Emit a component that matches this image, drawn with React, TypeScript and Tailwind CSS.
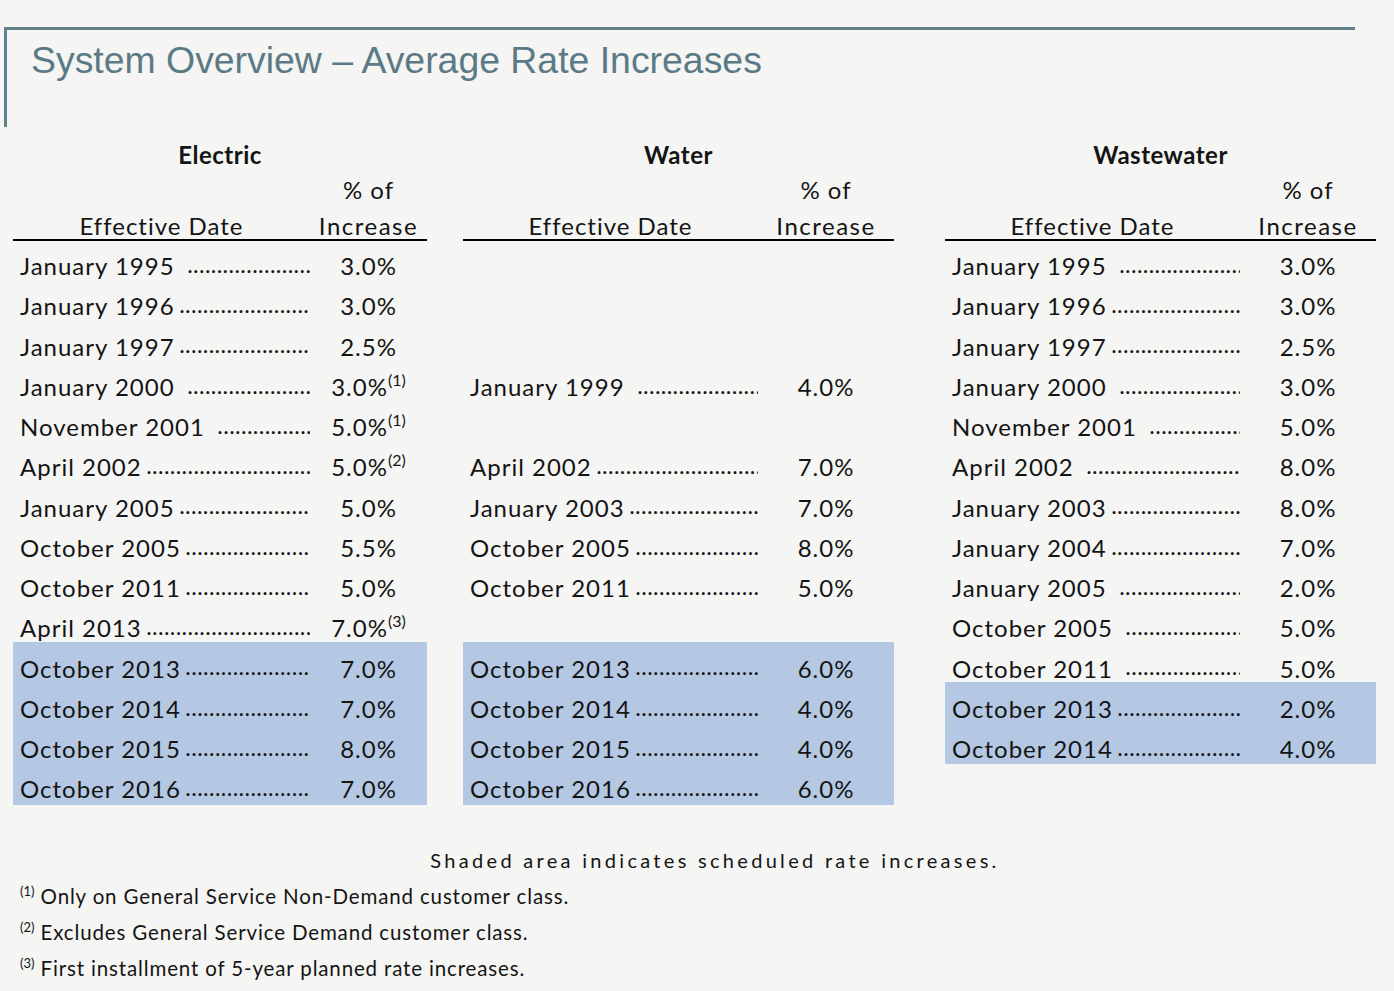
type Row = { date?: string; pct?: string; note?: string; wide?: boolean; shaded?: boolean }

const electric: Row[] = [
  { date: 'January 1995', pct: '3.0%', wide: true },
  { date: 'January 1996', pct: '3.0%' },
  { date: 'January 1997', pct: '2.5%' },
  { date: 'January 2000', pct: '3.0%', note: '(1)', wide: true },
  { date: 'November 2001', pct: '5.0%', note: '(1)', wide: true },
  { date: 'April 2002', pct: '5.0%', note: '(2)' },
  { date: 'January 2005', pct: '5.0%' },
  { date: 'October 2005', pct: '5.5%' },
  { date: 'October 2011', pct: '5.0%' },
  { date: 'April 2013', pct: '7.0%', note: '(3)' },
  { date: 'October 2013', pct: '7.0%', shaded: true },
  { date: 'October 2014', pct: '7.0%', shaded: true },
  { date: 'October 2015', pct: '8.0%', shaded: true },
  { date: 'October 2016', pct: '7.0%', shaded: true },
]

const water: Row[] = [
  {},
  {},
  {},
  { date: 'January 1999', pct: '4.0%', wide: true },
  {},
  { date: 'April 2002', pct: '7.0%' },
  { date: 'January 2003', pct: '7.0%' },
  { date: 'October 2005', pct: '8.0%' },
  { date: 'October 2011', pct: '5.0%' },
  {},
  { date: 'October 2013', pct: '6.0%', shaded: true },
  { date: 'October 2014', pct: '4.0%', shaded: true },
  { date: 'October 2015', pct: '4.0%', shaded: true },
  { date: 'October 2016', pct: '6.0%', shaded: true },
]

const wastewater: Row[] = [
  { date: 'January 1995', pct: '3.0%', wide: true },
  { date: 'January 1996', pct: '3.0%' },
  { date: 'January 1997', pct: '2.5%' },
  { date: 'January 2000', pct: '3.0%', wide: true },
  { date: 'November 2001', pct: '5.0%', wide: true },
  { date: 'April 2002', pct: '8.0%', wide: true },
  { date: 'January 2003', pct: '8.0%' },
  { date: 'January 2004', pct: '7.0%' },
  { date: 'January 2005', pct: '2.0%', wide: true },
  { date: 'October 2005', pct: '5.0%', wide: true },
  { date: 'October 2011', pct: '5.0%', wide: true },
  { date: 'October 2013', pct: '2.0%', shaded: true },
  { date: 'October 2014', pct: '4.0%', shaded: true },
]

const DOTS = '.'.repeat(40)

function RateRow({ row, dateW }: { row: Row; dateW: string }) {
  return (
    <div className="flex h-[40.25px] items-center">
      <div className={`flex ${dateW} items-center pl-[7px]`}>
        {row.date && (
          <>
            <span className="whitespace-nowrap tracking-[1px]">{row.date}</span>
            <span
              className={`${row.wide ? 'ml-[13px]' : 'ml-[5px]'} flex-1 overflow-hidden whitespace-nowrap text-[19px] font-bold tracking-[1.4px]`}
            >
              {DOTS}
            </span>
          </>
        )}
      </div>
      <div className="flex-1 text-center whitespace-nowrap tracking-[1px]">
        {row.pct}
        {row.note && <sup className="-top-[10px] text-[16px] tracking-normal">{row.note}</sup>}
      </div>
    </div>
  )
}

function RateTable({
  title,
  rows,
  width,
  dateW,
  shadeH,
}: {
  title: string
  rows: Row[]
  width: string
  dateW: string
  shadeH: string
}) {
  const plain = rows.filter((r) => !r.shaded)
  const shaded = rows.filter((r) => r.shaded)
  return (
    <div className={`${width} shrink-0`}>
      <div className="h-[35px] text-center font-bold leading-[35px] tracking-[0.5px]">{title}</div>
      <div className="flex h-[36px] leading-[36px]">
        <div className={dateW} />
        <div className="flex-1 text-center tracking-[1px]">% of</div>
      </div>
      <div className="flex h-[33px] border-b-2 border-black leading-[36px]">
        <div className={`${dateW} text-center tracking-[1px]`}>Effective Date</div>
        <div className="flex-1 text-center tracking-[1.5px]">Increase</div>
      </div>
      <div className="pt-[5px]">
        {plain.map((r, i) => (
          <RateRow key={i} row={r} dateW={dateW} />
        ))}
        <div className={`-mt-[7px] ${shadeH} bg-[#b5c8e3] pt-[7px]`}>
          {shaded.map((r, i) => (
            <RateRow key={i} row={r} dateW={dateW} />
          ))}
        </div>
      </div>
    </div>
  )
}

export default function App() {
  return (
    <div className="min-h-[991px] w-[1394px] bg-[#f5f5f3] pt-[27px] text-[#141414] [font-family:Lato,'Noto_Sans',sans-serif]">
      {/* Title frame */}
      <div className="ml-[4px] h-[100px] w-[1351px] border-t-[3px] border-l-[3px] border-[#62808b] pl-[24px] pt-[8px]">
        <h1 className="text-[37.4px] leading-[44px] text-[#5b7a86] [font-family:'Liberation_Sans',Arial,sans-serif]">
          System Overview – Average Rate Increases
        </h1>
      </div>

      {/* Tables */}
      <div className="mt-[10px] flex pl-[13px] text-[24px]">
        <RateTable title="Electric" rows={electric} width="w-[414px]" dateW="w-[297px]" shadeH="h-[163px]" />
        <div className="w-[36px] shrink-0" />
        <RateTable title="Water" rows={water} width="w-[431px]" dateW="w-[295px]" shadeH="h-[163px]" />
        <div className="w-[51px] shrink-0" />
        <RateTable title="Wastewater" rows={wastewater} width="w-[431px]" dateW="w-[295px]" shadeH="h-[82px]" />
      </div>

      {/* Notes */}
      <div className="mt-[41px] pl-[36px] text-center text-[20px] leading-[28px] tracking-[3.3px]">
        Shaded area indicates scheduled rate increases.
      </div>
      <div className="mt-[4px] pl-[20px] text-[20.5px] leading-[36px] tracking-[0.85px]">
        <p>
          <sup className="-top-[8px] text-[13px] tracking-normal">(1)</sup> Only on General Service Non-Demand customer
          class.
        </p>
        <p>
          <sup className="-top-[8px] text-[13px] tracking-normal">(2)</sup> Excludes General Service Demand customer class.
        </p>
        <p>
          <sup className="-top-[8px] text-[13px] tracking-normal">(3)</sup> First installment of 5-year planned rate
          increases.
        </p>
      </div>
    </div>
  )
}
